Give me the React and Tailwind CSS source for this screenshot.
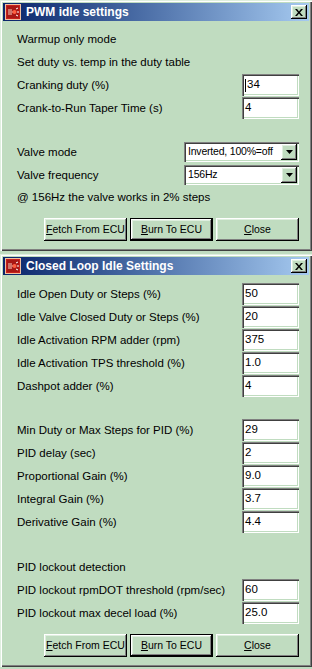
import React from 'react';

const raised =
  'shadow-[inset_-1px_-1px_0_#000,inset_1px_1px_0_#fff,inset_-2px_-2px_0_#808080,inset_2px_2px_0_#dfefdf]';
const sunken =
  'shadow-[inset_1px_1px_0_#808080,inset_2px_2px_0_#404040,inset_-1px_-1px_0_#fff,inset_-2px_-2px_0_#c0dcc0]';

function AppIcon() {
  return (
    <svg width="16" height="16" viewBox="0 0 16 16" className="shrink-0">
      <rect x="0.5" y="0.5" width="15" height="15" fill="#c8201c" stroke="#f0c0a0" />
      <rect x="2" y="2" width="12" height="12" fill="#a81814" />
      <path d="M3 6h4M3 8h5M3 10h4" stroke="#f4d0c0" strokeWidth="1" />
      <circle cx="9.5" cy="8" r="2" fill="#ff6040" />
      <path d="M11 5l2-1M11 11l2 1M12 8h2" stroke="#fff" strokeWidth="1" />
    </svg>
  );
}

function CloseBox() {
  return (
    <div className={`ml-auto w-[16px] h-[14px] bg-[#c0dcc0] flex items-center justify-center ${raised}`}>
      <svg width="8" height="7" viewBox="0 0 8 7">
        <path d="M0 0h2l2 2.5L6 0h2L5 3.5 8 7H6L4 4.5 2 7H0l3-3.5z" fill="#000" />
      </svg>
    </div>
  );
}

function Window({ title, className, children }) {
  return (
    <div
      className={`bg-[#c0dcc0] p-[3px] flex flex-col shadow-[inset_1px_1px_0_#dfefdf,inset_2px_2px_0_#fff,inset_-1px_-1px_0_#404040,inset_-2px_-2px_0_#808080] ${className}`}
    >
      <div className="h-[18px] flex items-center bg-linear-to-r from-[#0a246a] to-[#a6caf0] pl-[2px] pr-[2px]">
        <AppIcon />
        <span className="ml-[5px] text-white font-bold text-[12px]">{title}</span>
        <CloseBox />
      </div>
      {children}
    </div>
  );
}

function TextRow({ children, h = 'h-[23px]' }) {
  return <div className={`${h} flex items-center`}>{children}</div>;
}

function InputRow({ label, value, caret }) {
  return (
    <div className="h-[23px] flex items-start justify-between">
      <span className="leading-[22px]">{label}</span>
      <div className={`w-[57px] h-[22px] bg-white flex items-center pl-[3px] ${sunken}`}>
        {caret && <span className="w-[1px] h-[13px] bg-black mr-[1px]" />}
        <span>{value}</span>
      </div>
    </div>
  );
}

function SelectRow({ label, value }) {
  return (
    <div className="h-[23px] flex items-start justify-between">
      <span className="leading-[21px]">{label}</span>
      <div className={`w-[115px] h-[20px] bg-white flex items-center p-[2px] ${sunken}`}>
        <span className="flex-1 pl-[2px] whitespace-nowrap text-[10.5px] tracking-[-0.2px]">{value}</span>
        <div className={`w-[16px] h-[16px] shrink-0 bg-[#c0dcc0] flex items-center justify-center ${raised}`}>
          <svg width="7" height="4" viewBox="0 0 7 4">
            <path d="M0 0h7L3.5 4z" fill="#000" />
          </svg>
        </div>
      </div>
    </div>
  );
}

function Buttons({ className }) {
  const btn = `w-[83px] h-[23px] bg-[#c0dcc0] flex items-center justify-center whitespace-nowrap ${raised}`;
  return (
    <div className={`flex justify-end gap-[3px] text-[10.5px] ${className}`}>
      <div className={btn}>
        <span><u>F</u>etch From ECU</span>
      </div>
      <div className="w-[83px] h-[23px] border border-black">
        <div className={`w-full h-full bg-[#c0dcc0] flex items-center justify-center ${raised}`}>
          <span><u>B</u>urn To ECU</span>
        </div>
      </div>
      <div className={btn}>
        <span><u>C</u>lose</span>
      </div>
    </div>
  );
}

export default function App() {
  return (
    <div className="w-[312px] h-[669px] bg-[#c0dcc0] text-black text-[11.5px] font-['Liberation_Sans',Arial,sans-serif] flex flex-col">
      <Window title="PWM idle settings" className="h-[251px]">
        <div className="pl-[14px] pr-[10px] pt-[7px] flex flex-col">
          <TextRow>Warmup only mode</TextRow>
          <TextRow>Set duty vs. temp in the duty table</TextRow>
          <InputRow label="Cranking duty (%)" value="34" caret />
          <InputRow label="Crank-to-Run Taper Time (s)" value="4" />
          <div className="h-[22px]" />
          <SelectRow label="Valve mode" value="Inverted, 100%=off" />
          <SelectRow label="Valve frequency" value="156Hz" />
          <TextRow h="h-[20px]">@ 156Hz the valve works in 2% steps</TextRow>
          <Buttons className="mt-[10px]" />
        </div>
      </Window>
      <div className="h-[3px]" />
      <Window title="Closed Loop Idle Settings" className="h-[413px]">
        <div className="pl-[14px] pr-[10px] pt-[8px] flex flex-col">
          <InputRow label="Idle Open Duty or Steps (%)" value="50" />
          <InputRow label="Idle Valve Closed Duty or Steps (%)" value="20" />
          <InputRow label="Idle Activation RPM adder (rpm)" value="375" />
          <InputRow label="Idle Activation TPS threshold (%)" value="1.0" />
          <InputRow label="Dashpot adder (%)" value="4" />
          <div className="h-[21px]" />
          <InputRow label="Min Duty or Max Steps for PID (%)" value="29" />
          <InputRow label="PID delay (sec)" value="2" />
          <InputRow label="Proportional Gain (%)" value="9.0" />
          <InputRow label="Integral Gain (%)" value="3.7" />
          <InputRow label="Derivative Gain (%)" value="4.4" />
          <div className="h-[22px]" />
          <TextRow>PID lockout detection</TextRow>
          <InputRow label="PID lockout rpmDOT threshold (rpm/sec)" value="60" />
          <InputRow label="PID lockout max decel load (%)" value="25.0" />
          <Buttons className="mt-[9px]" />
        </div>
      </Window>
    </div>
  );
}
